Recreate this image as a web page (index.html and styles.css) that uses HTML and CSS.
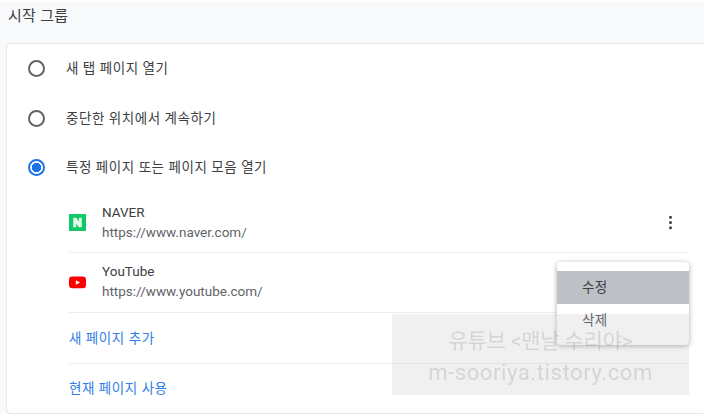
FILE: index.html
```html
<!DOCTYPE html>
<html lang="ko">
<head>
<meta charset="utf-8">
<title>시작 그룹</title>
<link rel="stylesheet" href="styles.css">
</head>
<body>
<main class="page">
  <h2 class="title">시작 그룹</h2>
  <section class="card">
    <div class="radio-row"><span class="radio"></span><span class="ko">새 탭 페이지 열기</span></div>
    <div class="radio-row"><span class="radio"></span><span class="ko">중단한 위치에서 계속하기</span></div>
    <div class="radio-row"><span class="radio checked"></span><span class="ko">특정 페이지 또는 페이지 모음 열기</span></div>
    <div class="list">
      <div class="site first">
        <svg class="favicon" viewBox="0 0 16 16"><rect width="16" height="16" fill="#0fc868"/><path d="M4 3.5h2.9l2.4 3.6V3.5H12v9H9.2L6.8 8.9v3.6H4z" fill="#e4f8ec"/></svg>
        <div class="site-text"><div class="site-name">NAVER</div><div class="site-url">https://www.naver.com/</div></div>
        <svg class="more" viewBox="0 0 4 16"><circle cx="2" cy="2.5" r="1.6"/><circle cx="2" cy="8" r="1.6"/><circle cx="2" cy="13.5" r="1.6"/></svg>
      </div>
      <div class="site second">
        <svg class="favicon" viewBox="0 0 16 16"><rect y="2.4" width="16" height="11" rx="3" fill="#f00"/><path d="M6.4 5.8v4.4L10.4 8z" fill="#fff"/></svg>
        <div class="site-text"><div class="site-name">YouTube</div><div class="site-url">https://www.youtube.com/</div></div>
      </div>
      <a class="action ko">새 페이지 추가</a>
      <a class="action ko">현재 페이지 사용</a>
    </div>
  </section>
  <div class="menu">
    <div class="menu-item active">수정</div>
    <div class="menu-item">삭제</div>
  </div>
  <div class="watermark">
    <div class="wm-line1">유튜브 &lt;맨날 수리야&gt;</div>
    <div class="wm-line2">m-sooriya.tistory.com</div>
  </div>
</main>
</body>
</html>
```
FILE: styles.css
```css
* { box-sizing: border-box; }
html, body { margin: 0; height: 414px; overflow: hidden; background: #f8f9fa; }
body { font-family: Roboto, "Noto Sans CJK KR", sans-serif; color: #3c4043; }
.page { position: relative; width: 704px; height: 414px; padding-top: 2px; border-top: 2px solid #fff; }
.title { margin: 0; padding-left: 8px; height: 40px; font-size: 15px; line-height: 24px; font-weight: 400; letter-spacing: .3px; color: #3c4043; }
.card { margin-left: 7px; height: 369px; background: #fff; border-radius: 4px 0 0 4px; box-shadow: 0 0 2px rgba(60,64,67,.35); }
.radio-row { display: flex; align-items: center; gap: 21px; height: 49.5px; padding-left: 21px; }
.radio-row .ko { padding-bottom: 3px; }
.ko { font-size: 13.5px; letter-spacing: .55px; }
.radio { width: 17px; height: 17px; border: 2px solid #5f6368; border-radius: 50%; flex: none; }
.radio.checked { border-color: #1a73e8; background: radial-gradient(circle, #1a73e8 0 4.5px, #fff 5px); }
.list { margin: 0 15px 0 62px; }
.site { display: flex; align-items: center; height: 60px; border-bottom: 1px solid #edeeef; }
.site.first { height: 59px; margin-top: 1px; }
.site.second .site-text { padding-bottom: 2px; }
.favicon { width: 17px; height: 17px; flex: none; margin-right: 16px; }
.site-text { flex: 1; }
.site-name { font-size: 13.5px; line-height: 20px; color: #3c4043; }
.site-url { font-size: 13.5px; line-height: 21px; color: #5f6368; }
.more { width: 5px; height: 15px; fill: #3c4043; margin-right: 16px; }
.action { display: flex; align-items: center; height: 51px; padding-bottom: 2px; color: #2f7de8; border-bottom: 1px solid #edeeef; }
.action:last-child { border-bottom: 0; height: 49px; }
.menu { position: absolute; left: 557px; top: 260px; width: 132px; height: 83px; padding-top: 9px; background: #fff; border-radius: 4px; box-shadow: 0 1px 5px rgba(60,64,67,.45); font-size: 13.5px; letter-spacing: .3px; }
.menu-item { height: 33px; padding-left: 25px; line-height: 32px; }
.menu-item.active { background: #bdc1c6; }
.watermark { position: absolute; left: 392px; top: 312px; width: 297px; height: 81px; background: rgba(200,200,200,.28); color: rgba(120,120,120,.24); text-align: center; }
.wm-line1 { font-size: 21px; line-height: 26px; margin-top: 14px; letter-spacing: -.2px; }
.wm-line2 { font-size: 22px; line-height: 30px; margin-top: 4px; letter-spacing: .6px; }
```
